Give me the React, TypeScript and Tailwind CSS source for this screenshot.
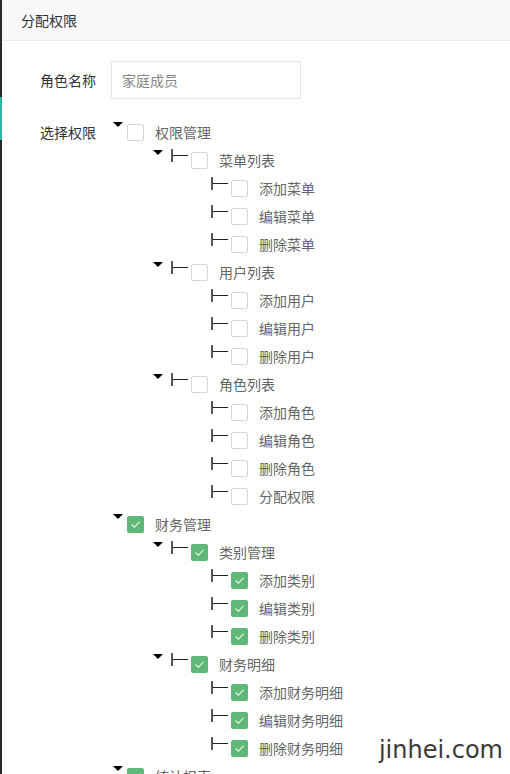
import React from "react"

type Node = { label: string; level: 0 | 1 | 2; checked: boolean; open?: boolean }

const nodes: Node[] = [
  { label: "权限管理", level: 0, checked: false, open: true },
  { label: "菜单列表", level: 1, checked: false, open: true },
  { label: "添加菜单", level: 2, checked: false },
  { label: "编辑菜单", level: 2, checked: false },
  { label: "删除菜单", level: 2, checked: false },
  { label: "用户列表", level: 1, checked: false, open: true },
  { label: "添加用户", level: 2, checked: false },
  { label: "编辑用户", level: 2, checked: false },
  { label: "删除用户", level: 2, checked: false },
  { label: "角色列表", level: 1, checked: false, open: true },
  { label: "添加角色", level: 2, checked: false },
  { label: "编辑角色", level: 2, checked: false },
  { label: "删除角色", level: 2, checked: false },
  { label: "分配权限", level: 2, checked: false },
  { label: "财务管理", level: 0, checked: true, open: true },
  { label: "类别管理", level: 1, checked: true, open: true },
  { label: "添加类别", level: 2, checked: true },
  { label: "编辑类别", level: 2, checked: true },
  { label: "删除类别", level: 2, checked: true },
  { label: "财务明细", level: 1, checked: true, open: true },
  { label: "添加财务明细", level: 2, checked: true },
  { label: "编辑财务明细", level: 2, checked: true },
  { label: "删除财务明细", level: 2, checked: true },
  { label: "统计报表", level: 0, checked: true, open: true },
]

function Caret() {
  return (
    <span className="mt-[4px] block h-0 w-0 border-x-[5px] border-t-[5px] border-x-transparent border-t-black" />
  )
}

function Connector() {
  return (
    <span className="flex h-[28px] w-[20px] items-start">
      <span className="mt-[3px] h-[13px] w-[2px] bg-[#555]" />
      <span className="mt-[9px] h-px w-[15px] bg-[#222]" />
    </span>
  )
}

function Checkbox({ checked }: { checked: boolean }) {
  return checked ? (
    <span className="flex h-[17px] w-[17px] items-center justify-center rounded-[2px] bg-[#5fb878]">
      <svg width="11" height="9" viewBox="0 0 11 9" fill="none">
        <path d="M1.5 4.5 L4.3 7.2 L9.5 1.8" stroke="#e6f5ea" strokeWidth="1.1" />
      </svg>
    </span>
  ) : (
    <span className="block h-[17px] w-[17px] rounded-[2px] border border-[#d6d6d6] bg-white" />
  )
}

function TreeRow({ node }: { node: Node }) {
  if (node.level === 0) {
    return (
      <div className="flex h-[28px] items-center pl-[2px]">
        <span className="flex h-[28px] w-[14px] items-start">{node.open && <Caret />}</span>
        <Checkbox checked={node.checked} />
        <span className="ml-[11px] text-[14px] text-[#666]">{node.label}</span>
      </div>
    )
  }
  return (
    <div className={`flex h-[28px] items-center ${node.level === 1 ? "pl-[42px]" : "pl-[82px]"}`}>
      <span className="flex h-[28px] w-[18px] items-start">{node.open && <Caret />}</span>
      <Connector />
      <Checkbox checked={node.checked} />
      <span className="ml-[11px] text-[14px] text-[#666]">{node.label}</span>
    </div>
  )
}

export default function App() {
  return (
    <div
      className="relative flex h-[774px] w-[510px] overflow-hidden bg-white"
      style={{ fontFamily: '"Noto Sans CJK SC", "Noto Sans", sans-serif' }}
    >
      {/* left edge of the page frame */}
      <div className="flex w-[2px] flex-col">
        <div className="h-[97px] bg-[#2a2a2a]" />
        <div className="h-[43px] bg-[#2bb3a3]" />
        <div className="flex-1 bg-[#2a2a2a]" />
      </div>

      <div className="flex-1">
        <div className="flex h-[41px] items-center border-b border-[#ececec] bg-[#f8f8f8] pl-[19px] text-[14px] text-[#333]">
          分配权限
        </div>

        <div className="pt-[20px]">
          <div className="flex items-center">
            <label className="w-[109px] pr-[15px] text-right text-[14px] text-[#333]">角色名称</label>
            <div className="flex h-[38px] w-[190px] items-center rounded-[2px] border border-[#e6e6e6] px-[10px] text-[14px] text-[#888]">
              家庭成员
            </div>
          </div>

          <div className="mt-[20px] flex">
            <label className="flex h-[27px] w-[109px] items-center justify-end pr-[15px] text-[14px] text-[#333]">
              选择权限
            </label>
            <div className="-mt-px flex-1">
              {nodes.map((n) => (
                <TreeRow key={n.label} node={n} />
              ))}
            </div>
          </div>
        </div>
      </div>

      <div
        className="absolute bottom-[12px] right-[7px] text-[24px] leading-none text-[#3a3a3a]"
        style={{ fontFamily: '"DejaVu Sans", sans-serif' }}
      >
        jinhei.com
      </div>
    </div>
  )
}
